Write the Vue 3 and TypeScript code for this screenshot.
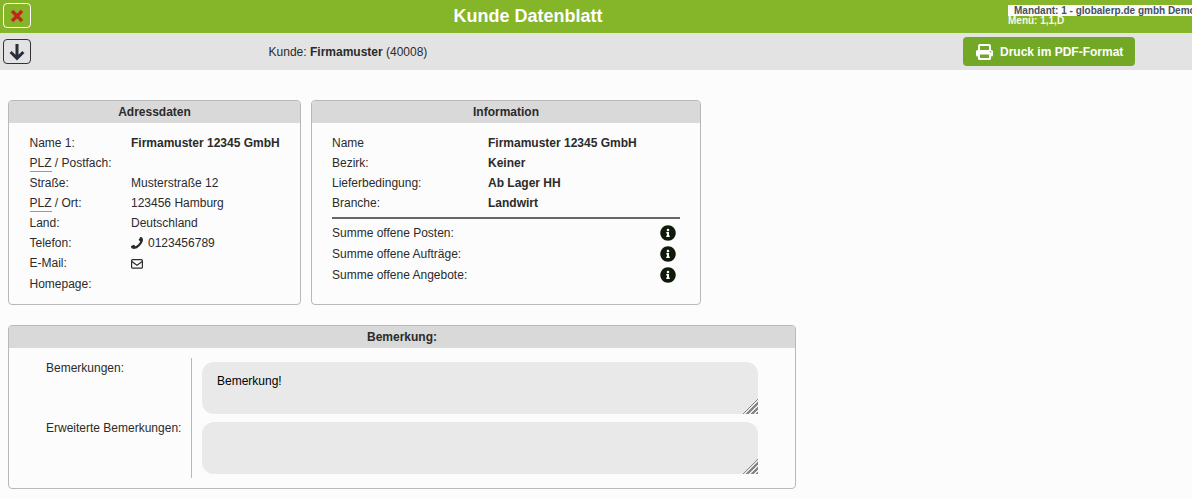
<script setup lang="ts">
const infoRows: [string, string][] = [
  ["Name", "Firmamuster 12345 GmbH"],
  ["Bezirk:", "Keiner"],
  ["Lieferbedingung:", "Ab Lager HH"],
  ["Branche:", "Landwirt"],
];
const sums: string[] = ["Summe offene Posten:", "Summe offene Aufträge:", "Summe offene Angebote:"];
</script>

<template>
  <div class="page">
    <header class="topbar">
      <button class="icon-btn light" aria-label="Schließen">
        <svg width="14" height="14" viewBox="0 0 14 14"><path d="M2 2l10 10M12 2L2 12" stroke="#c3271b" stroke-width="3.4" fill="none"/></svg>
      </button>
      <h1 class="title">Kunde Datenblatt</h1>
      <div class="tenant">
        <div class="tenant-name">Mandant: 1 - globalerp.de gmbh Demo</div>
        <div class="tenant-menu">Menü: 1,1,D</div>
      </div>
    </header>

    <div class="toolbar">
      <button class="icon-btn dark" aria-label="Herunter">
        <svg width="16" height="18" viewBox="0 0 16 18"><path d="M8 1v15M1.6 9L8 15.4 14.4 9" stroke="#27303a" stroke-width="3" fill="none"/></svg>
      </button>
      <div class="customer">Kunde: <b>Firmamuster</b> (40008)</div>
      <button class="pdf">
        <svg width="17" height="16" viewBox="0 0 17 16">
          <rect x="3" y="1" width="11" height="6" rx="1" fill="none" stroke="#fff" stroke-width="2"/>
          <rect x="0" y="6" width="17" height="6.5" rx="1.6" fill="#fff"/>
          <rect x="3" y="9.5" width="11" height="5.5" rx="0.6" fill="#72a826" stroke="#fff" stroke-width="2"/>
          <circle cx="14.6" cy="7.8" r="0.8" fill="#72a826"/>
        </svg>
        <span>Druck im PDF-Format</span>
      </button>
    </div>

    <main class="content">
      <div class="panels">
        <section class="panel address">
          <h2 class="panel-head">Adressdaten</h2>
          <div class="address-body">
            <div class="row"><span>Name 1:</span><b>Firmamuster 12345 GmbH</b></div>
            <div class="row"><span><abbr>PLZ</abbr> / Postfach:</span><span></span></div>
            <div class="row"><span>Straße:</span><span>Musterstraße 12</span></div>
            <div class="row"><span><abbr>PLZ</abbr> / Ort:</span><span>123456 Hamburg</span></div>
            <div class="row"><span>Land:</span><span>Deutschland</span></div>
            <div class="row"><span>Telefon:</span>
              <span class="phone">
                <svg width="12" height="12" viewBox="192 128 1408 1408"><path transform="translate(1792,0) scale(-1,1)" fill="#2b2b2b" d="M1600 1240q0 27-10 70.5t-21 68.5q-21 50-122 106-94 51-186 51-27 0-53-3.5t-57.5-12.5-47-14.5-55.5-20.5-49-18q-98-35-175-83-127-79-264-216t-216-264q-48-77-83-175-3-9-18-49t-20.5-55.5-14.5-47-12.5-57.5-3.5-53q0-92 51-186 56-101 106-122 25-11 68.5-21t70.5-10q14 0 21 3 18 6 53 76 11 19 30 54t35 63.5 31 53.5q3 4 17.5 25t21.5 35.5 7 28.5q0 20-28.5 50t-62 55-62 53-28.5 46q0 9 5 22.5t8.5 20.5 14 24 11.5 19q76 137 174 235t235 174q2 1 19 11.5t24 14 20.5 8.5 22.5 5q18 0 46-28.5t53-62 55-62 50-28.5q14 0 28.5 7t35.5 21.5 25 17.5q25 15 53.5 31t63.5 35 54 30q70 35 76 53 3 7 3 21z"/></svg>
                0123456789
              </span>
            </div>
            <div class="row"><span>E-Mail:</span>
              <span class="mail">
                <svg width="12" height="10" viewBox="0 0 12 10"><rect x="0.6" y="0.6" width="10.8" height="8.6" rx="1" fill="none" stroke="#2b2b2b" stroke-width="1.2"/><path d="M0.8 2.4L6 6.2l5.2-3.8" fill="none" stroke="#2b2b2b" stroke-width="1.2"/></svg>
              </span>
            </div>
            <div class="row last"><span>Homepage:</span><span></span></div>
          </div>
        </section>

        <section class="panel info">
          <h2 class="panel-head">Information</h2>
          <div class="info-body">
            <div v-for="r in infoRows" :key="r[0]" class="row"><span>{{ r[0] }}</span><b>{{ r[1] }}</b></div>
            <hr class="sep" />
            <div v-for="s in sums" :key="s" class="sum-row">
              <span>{{ s }}</span>
              <svg width="16" height="16" viewBox="0 0 512 512"><path fill="#0f1a0a" d="M256 8C119.043 8 8 119.083 8 256c0 136.997 111.043 248 248 248s248-111.003 248-248C504 119.083 392.957 8 256 8z"/><path fill="#fff" d="M256 118c23.196 0 42 18.804 42 42s-18.804 42-42 42-42-18.804-42-42 18.804-42 42-42zm56 254c0 6.627-5.373 12-12 12h-88c-6.627 0-12-5.373-12-12v-24c0-6.627 5.373-12 12-12h12v-64h-12c-6.627 0-12-5.373-12-12v-24c0-6.627 5.373-12 12-12h64c6.627 0 12 5.373 12 12v100h12c6.627 0 12 5.373 12 12v24z"/></svg>
            </div>
          </div>
        </section>
      </div>

      <section class="panel remark">
        <h2 class="panel-head">Bemerkung:</h2>
        <div class="remark-body">
          <div class="remark-labels">
            <label>Bemerkungen:</label>
            <label>Erweiterte Bemerkungen:</label>
          </div>
          <div class="remark-fields">
            <textarea readonly>Bemerkung!</textarea>
            <textarea readonly></textarea>
          </div>
        </div>
      </section>
    </main>
  </div>
</template>

<style scoped>
.page {
  width: 1192px;
  height: 499px;
  overflow: hidden;
  background: #fcfcfc;
  color: #2b2b2b;
  font: 12px/20px "Liberation Sans", Arial, sans-serif;
}
.topbar {
  height: 33px;
  background: #85b528;
  display: flex;
  align-items: flex-start;
  padding-left: 3px;
  box-sizing: border-box;
}
.icon-btn {
  width: 28px;
  height: 25px;
  padding: 0;
  border-radius: 4px;
  background: transparent;
  display: flex;
  align-items: center;
  justify-content: center;
  box-sizing: border-box;
}
.icon-btn.light { border: 1px solid #fff; margin-top: 3px; }
.icon-btn.dark { border: 1px solid #333; }
.title {
  flex: 1;
  margin: 0 0 0 17px;
  text-align: center;
  color: #fff;
  font-size: 18px;
  line-height: 33px;
  font-weight: bold;
}
.tenant {
  width: 184px;
  overflow: hidden;
  padding-top: 5px;
  font-size: 10px;
  font-weight: bold;
  white-space: nowrap;
}
.tenant-name {
  background: #fcfcfc;
  color: #45505c;
  padding-left: 6px;
  height: 11px;
  line-height: 11px;
}
.tenant-menu { color: #f4fbe4; height: 10px; line-height: 10px; }
.toolbar {
  height: 37px;
  background: #e3e3e3;
  display: flex;
  align-items: center;
  padding: 0 57px 0 3px;
  box-sizing: border-box;
}
.customer { margin-left: 237.6px; flex: 1; }
.pdf {
  width: 172px;
  height: 29px;
  border: 0;
  border-radius: 4px;
  background: #72a826;
  color: #fff;
  font: bold 12px "Liberation Sans", Arial, sans-serif;
  display: flex;
  align-items: center;
  gap: 7px;
  padding: 0 0 0 13px;
}
.content { padding: 30px 8px 0; }
.panels { display: flex; gap: 10px; align-items: flex-start; }
.panel {
  border: 1px solid #b9b9b9;
  border-radius: 4px;
  box-sizing: border-box;
  overflow: hidden;
}
.panel-head {
  margin: 0;
  height: 22px;
  background: #d9d9d9;
  text-align: center;
  font-size: 12px;
  line-height: 22px;
  font-weight: bold;
}
.address { width: 293px; height: 205px; }
.address-body { padding: 10px 0 0 20.5px; }
.address .row { display: grid; grid-template-columns: 101.5px 1fr; height: 20px; }
.address .last { margin-top: 1px; }
abbr { border-bottom: 1px solid #999; padding-bottom: 1px; text-decoration: none; }
.phone { display: flex; align-items: center; gap: 5px; }
.mail { display: flex; align-items: center; padding-top: 1px; }
.info { width: 390px; height: 205px; }
.info-body { padding: 10px 20px 0; }
.info .row { display: grid; grid-template-columns: 156px 1fr; height: 20px; }
.sep { margin: 4px 0 3px; border: 0; height: 2px; background: #666; }
.sum-row {
  height: 21px;
  display: flex;
  align-items: center;
  justify-content: space-between;
  padding-right: 4px;
}
.remark { width: 788px; height: 164px; margin-top: 20px; }
.remark-body { display: flex; padding: 10px 0 0 37px; }
.remark-labels {
  width: 145px;
  height: 120px;
  border-right: 1px solid #b9b9b9;
  display: flex;
  flex-direction: column;
}
.remark-labels label { height: 60px; }
.remark-fields { display: flex; flex-direction: column; gap: 8px; margin: 4px 0 0 10px; }
textarea {
  display: block;
  width: 556px;
  height: 52px;
  margin: 0;
  padding: 10px 15px;
  box-sizing: border-box;
  border: 0;
  outline: 0;
  border-radius: 12px;
  background: #e9e9e9;
  color: #000;
  font: 12px/18px "Liberation Sans", Arial, sans-serif;
  resize: both;
}
textarea::-webkit-resizer {
  background:
    linear-gradient(135deg, #e9e9e9 50%, transparent 50%),
    repeating-linear-gradient(135deg, #e9e9e9 0 1.5px, #858585 1.5px 3.6px);
}
</style>

<style>
body { margin: 0; background: #fcfcfc; }
</style>
